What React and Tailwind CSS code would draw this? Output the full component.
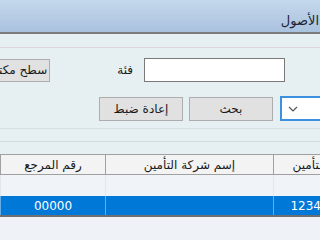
import React from 'react';

const font = { fontFamily: '"DejaVu Sans", Tahoma, sans-serif' };

export default function App() {
  return (
    <div dir="rtl" className="w-[320px] h-[240px] overflow-hidden bg-[#e6eff2] text-[#1a1a1a]" style={font}>
      {/* Title bar */}
      <div className="h-[34px] bg-gradient-to-b from-[#c5d8ec] to-[#a9c2de] border-b-2 border-[#7b7b7b] flex items-center">
        <span className="text-[13px] mr-[1px] mt-[10px] text-[#222236]">الأصول</span>
      </div>

      {/* Filters */}
      <div className="h-[14px] border-b border-[#ddd6dc]" />

      <div className="flex items-center mt-[10px] pr-[35px] h-[24px]">
        <input className="w-[141px] h-[24px] shrink-0 bg-white border border-[#7a7a7a] outline-none" />
        <span className="mr-[11px] text-[12px] shrink-0">فئة</span>
        <button className="mr-[67px] w-[84px] h-[23px] shrink-0 bg-[#e1e1e1] border border-[#adadad] text-[12px] text-right pr-[2px] whitespace-nowrap overflow-hidden">
          سطح مكتب
        </button>
      </div>

      <div className="flex items-center mt-[14px] h-[25px]">
        <div className="mr-[-60px] w-[100px] h-[25px] shrink-0 bg-white border-2 border-[#3d8fe0] flex items-center justify-end pl-[6px]">
          <svg width="10" height="6" viewBox="0 0 10 6">
            <path d="M1 1 L5 5 L9 1" fill="none" stroke="#555" strokeWidth="1.2" />
          </svg>
        </div>
        <button className="mr-[7px] w-[84px] h-[24px] shrink-0 bg-[#e1e1e1] border border-[#adadad] text-[12px]">
          بحث
        </button>
        <button className="mr-[6px] w-[84px] h-[24px] shrink-0 bg-[#e1e1e1] border border-[#adadad] text-[12px]">
          إعادة ضبط
        </button>
      </div>

      <div className="mt-[7px] h-[1px] bg-[#d6dee2]" />
      <div className="mt-[12px] h-[1px] bg-[#d2dade]" />

      {/* Grid */}
      <div className="mt-[12px] mr-[-48px] w-[368px] bg-[#f0f4f8]">
        <div className="flex h-[21px] bg-[#f3f3f3] border-y border-[#a0a0a0] text-[12px]">
          <div className="w-[95px] border-l border-[#a0a0a0] flex items-center justify-center shrink-0">رقم التأمين</div>
          <div className="w-[168px] border-l border-[#a0a0a0] flex items-center justify-center shrink-0">إسم شركة التأمين</div>
          <div className="w-[105px] border-l border-[#a0a0a0] flex items-center justify-center shrink-0">رقم المرجع</div>
        </div>
        <div className="flex h-[21px]">
          <div className="w-[95px] border-l border-[#e2e7ee] shrink-0" />
          <div className="w-[168px] border-l border-[#e2e7ee] shrink-0" />
          <div className="w-[105px] border-l border-[#e2e7ee] shrink-0" />
        </div>
        <div className="flex h-[21px] bg-[#0078d7] text-white text-[12px] border-b-2 border-[#6f6f6f]">
          <div className="w-[95px] border-l border-[#66aee8] flex items-center justify-center shrink-0">12345678</div>
          <div className="w-[168px] border-l border-[#66aee8] shrink-0" />
          <div className="w-[105px] border-l border-[#66aee8] flex items-center justify-center shrink-0">00000</div>
        </div>
      </div>
      <div className="h-[40px] bg-[#eff3f8]" />
    </div>
  );
}
